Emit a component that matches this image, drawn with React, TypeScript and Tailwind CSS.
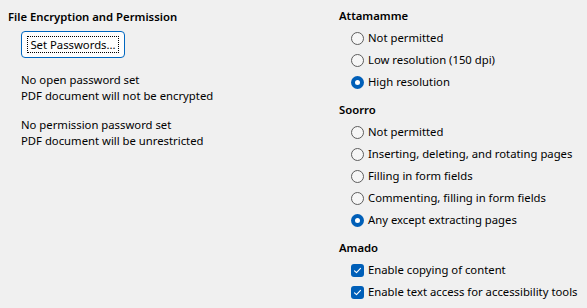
import React from "react";

// PDF export options: security tab (encryption, printing, changes, content)
const FONT = "font-['Segoe_UI','Noto_Sans',sans-serif]";

function Heading({ children, className = "" }: { children: React.ReactNode; className?: string }) {
  return <div className={`h-4 whitespace-nowrap text-[11.3px] font-semibold leading-4 ${className}`}>{children}</div>;
}

function Radio({ label, checked = false }: { label: string; checked?: boolean }) {
  return (
    <div className="flex h-[22px] items-center pl-[12px]">
      {checked ? (
        <span className="flex h-[13px] w-[13px] shrink-0 items-center justify-center rounded-full bg-[#005fb8]">
          <span className="h-[5px] w-[5px] rounded-full bg-white" />
        </span>
      ) : (
        <span className="h-[13px] w-[13px] shrink-0 rounded-full border border-[#5d5d5d] bg-[#f6f6f6]" />
      )}
      <span className="ml-[4px] whitespace-nowrap text-[11.3px] leading-4">{label}</span>
    </div>
  );
}

function Check({ label }: { label: string }) {
  return (
    <div className="flex h-[22px] items-center pl-[12px]">
      <span className="flex h-[13px] w-[13px] shrink-0 items-center justify-center rounded-[3px] bg-[#005fb8]">
        <svg width="9" height="9" viewBox="0 0 9 9" fill="none">
          <path d="M1.5 4.8 L3.5 6.7 L7.5 2.3" stroke="white" strokeWidth="1.1" strokeLinecap="round" strokeLinejoin="round" />
        </svg>
      </span>
      <span className="ml-[4px] whitespace-nowrap text-[11.3px] leading-4">{label}</span>
    </div>
  );
}

export default function App() {
  return (
    <div className={`flex h-[308px] w-[587px] bg-[#f0f0f0] pl-2 text-[#000] ${FONT}`}>
      {/* Left: encryption */}
      <div className="w-[331px] pt-[9px]">
        <Heading>File Encryption and Permission</Heading>
        <button
          type="button"
          className="ml-[13px] mt-[6px] flex h-[27px] w-[104px] items-center justify-center rounded-[4px] border border-[#0067c0] bg-[#fdfdfd]"
        >
          <span className="whitespace-nowrap border border-dotted border-black px-[2px] text-[11.3px] leading-[15px]">Set Passwords...</span>
        </button>
        <div className="ml-[13px] mt-[14px] whitespace-nowrap text-[11.3px] leading-4">
          <div>No open password set</div>
          <div>PDF document will not be encrypted</div>
        </div>
        <div className="ml-[13px] mt-[13px] whitespace-nowrap text-[11.3px] leading-4">
          <div>No permission password set</div>
          <div>PDF document will be unrestricted</div>
        </div>
      </div>

      {/* Right: printing / changes / content */}
      <div className="flex-1 pt-[8px]">
        <Heading>Attamamme</Heading>
        <div className="mt-[3px]">
          <Radio label="Not permitted" />
          <Radio label="Low resolution (150 dpi)" />
          <Radio label="High resolution" checked />
        </div>
        <Heading className="mt-[9px]">Soorro</Heading>
        <div className="mt-[3px]">
          <Radio label="Not permitted" />
          <Radio label="Inserting, deleting, and rotating pages" />
          <Radio label="Filling in form fields" />
          <Radio label="Commenting, filling in form fields" />
          <Radio label="Any except extracting pages" checked />
        </div>
        <Heading className="mt-[9px]">Amado</Heading>
        <div className="mt-[3px]">
          <Check label="Enable copying of content" />
          <Check label="Enable text access for accessibility tools" />
        </div>
      </div>
    </div>
  );
}
